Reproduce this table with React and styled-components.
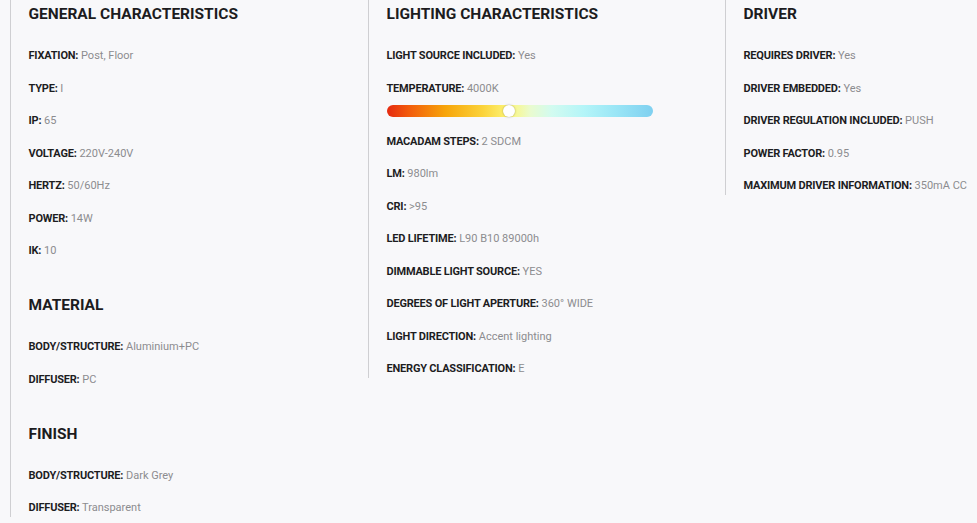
import styled, { createGlobalStyle } from "styled-components";

const GlobalStyle = createGlobalStyle`
  html, body {
    margin: 0;
    padding: 0;
    background: #f8f8fa;
    overflow: hidden;
  }
  body {
    font-family: Roboto, "Liberation Sans", Arial, sans-serif;
  }
`;

const Page = styled.div`
  display: grid;
  grid-template-columns: 358px 357px 1fr;
  align-items: start;
  padding: 0 0 0 10px;
  width: 977px;
  height: 523px;
  box-sizing: border-box;
  background: #f8f8fa;
`;

const Column = styled.div`
  border-left: 1.5px solid #cfcfd2;
  padding: 5px 0 0 17.5px;
  min-width: 0;
`;

const Section = styled.div`
  margin-bottom: 36.5px;

  &:last-child {
    margin-bottom: 0;
  }
`;

const Title = styled.h2`
  margin: 0 0 25px;
  font-size: 15.5px;
  line-height: 18px;
  font-weight: 700;
  color: #1c1c1e;
`;

const Row = styled.p`
  margin: 0 0 ${(p) => (p.tight ? "8px" : "16px")};
  font-size: 11px;
  line-height: 16.5px;
  white-space: nowrap;
  color: #8c8c8f;

  &:last-child {
    margin-bottom: 0;
  }
`;

const Label = styled.b`
  font-weight: 700;
  color: #1d1d1f;
  letter-spacing: -0.2px;
`;

const Slider = styled.div`
  position: relative;
  width: 266px;
  height: 12px;
  border-radius: 6px;
  margin: 0 0 16.5px;
  background: linear-gradient(
    to right,
    #e52a10 0%,
    #f25a0c 8%,
    #f7a50a 22%,
    #fbd33a 36%,
    #fdf67a 46%,
    #e9fbcf 54%,
    #d2fbf0 62%,
    #b4f5f8 74%,
    #9ae6f6 86%,
    #7fd0f0 100%
  );
`;

const Knob = styled.span`
  position: absolute;
  top: 0;
  left: ${(p) => p.pos}px;
  width: 12px;
  height: 12px;
  margin-left: -6px;
  border-radius: 50%;
  background: #ffffff;
  box-shadow: 0 0 2px rgba(0, 0, 0, 0.35);
`;

const Spec = ({ label, value, tight }) => (
  <Row tight={tight}>
    <Label>{label}:</Label> {value}
  </Row>
);

const general = [
  ["FIXATION", "Post, Floor"],
  ["TYPE", "I"],
  ["IP", "65"],
  ["VOLTAGE", "220V-240V"],
  ["HERTZ", "50/60Hz"],
  ["POWER", "14W"],
  ["IK", "10"],
];

const lighting = [
  ["MACADAM STEPS", "2 SDCM"],
  ["LM", "980lm"],
  ["CRI", ">95"],
  ["LED LIFETIME", "L90 B10 89000h"],
  ["DIMMABLE LIGHT SOURCE", "YES"],
  ["DEGREES OF LIGHT APERTURE", "360° WIDE"],
  ["LIGHT DIRECTION", "Accent lighting"],
  ["ENERGY CLASSIFICATION", "E"],
];

const driver = [
  ["REQUIRES DRIVER", "Yes"],
  ["DRIVER EMBEDDED", "Yes"],
  ["DRIVER REGULATION INCLUDED", "PUSH"],
  ["POWER FACTOR", "0.95"],
  ["MAXIMUM DRIVER INFORMATION", "350mA CC"],
];

const App = () => (
  <>
    <GlobalStyle />
    <Page>
      <Column>
        <Section>
          <Title>GENERAL CHARACTERISTICS</Title>
          {general.map(([l, v]) => (
            <Spec key={l} label={l} value={v} />
          ))}
        </Section>
        <Section>
          <Title>MATERIAL</Title>
          <Spec label="BODY/STRUCTURE" value="Aluminium+PC" />
          <Spec label="DIFFUSER" value="PC" />
        </Section>
        <Section>
          <Title>FINISH</Title>
          <Spec label="BODY/STRUCTURE" value="Dark Grey" />
          <Spec label="DIFFUSER" value="Transparent" />
        </Section>
      </Column>

      <Column>
        <Section>
          <Title>LIGHTING CHARACTERISTICS</Title>
          <Spec label="LIGHT SOURCE INCLUDED" value="Yes" />
          <Spec label="TEMPERATURE" value="4000K" tight />
          <Slider>
            <Knob pos={122} />
          </Slider>
          {lighting.map(([l, v]) => (
            <Spec key={l} label={l} value={v} />
          ))}
        </Section>
      </Column>

      <Column>
        <Section>
          <Title>DRIVER</Title>
          {driver.map(([l, v]) => (
            <Spec key={l} label={l} value={v} />
          ))}
        </Section>
      </Column>
    </Page>
  </>
);

export default App;
